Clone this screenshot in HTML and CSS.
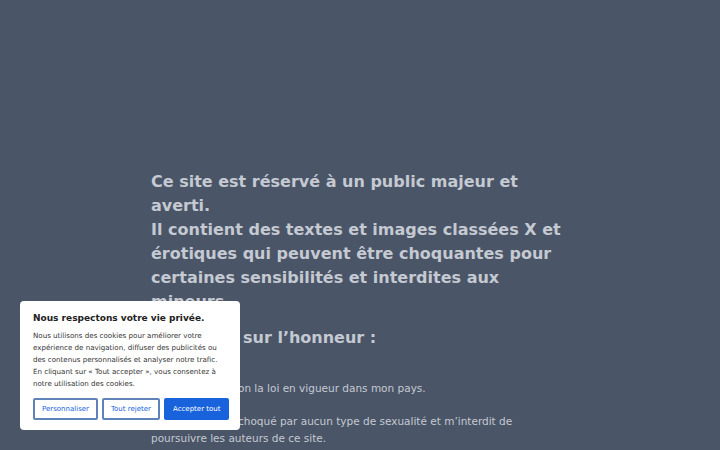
FILE: index.html
```html
<!DOCTYPE html>
<html lang="fr">
<head>
  <meta charset="utf-8">
  <title>Avertissement</title>
  <link rel="stylesheet" href="styles.css">
</head>
<body>
  <div class="warning">
    <p class="lead">Ce site est réservé à un public majeur et averti.<br>
    Il contient des textes et images classées X et érotiques qui peuvent être choquantes pour certaines sensibilités et interdites aux mineurs.</p>
    <p class="lead certify">Je certifie sur l’honneur :</p>
    <p class="item">- Être majeur selon la loi en vigueur dans mon pays.</p>
    <p class="item">- Ne jamais être choqué par aucun type de sexualité et m’interdit de poursuivre les auteurs de ce site.</p>
  </div>

  <div class="cookie-box">
    <p class="cookie-title">Nous respectons votre vie privée.</p>
    <p class="cookie-text">Nous utilisons des cookies pour améliorer votre expérience de navigation, diffuser des publicités ou des contenus personnalisés et analyser notre trafic. En cliquant sur « Tout accepter », vous consentez à notre utilisation des cookies.</p>
    <div class="cookie-buttons">
      <button class="btn btn-outline">Personnaliser</button>
      <button class="btn btn-outline">Tout rejeter</button>
      <button class="btn btn-accept">Accepter tout</button>
    </div>
  </div>
</body>
</html>
```

FILE: styles.css
```css
html, body {
  height: 100%;
}
body {
  margin: 0;
  background: #4a5568;
  font-family: "DejaVu Sans", sans-serif;
  color: #c5c9d1;
  overflow: hidden;
}
.warning {
  max-width: 418px;
  margin: 0 auto;
  padding-top: 170px;
}
.warning p {
  margin: 0;
}
.lead {
  font-size: 16px;
  font-weight: bold;
  line-height: 24px;
}
.warning .certify {
  margin-top: 12px;
  margin-bottom: 30px;
}
.warning .item {
  font-size: 10.5px;
  line-height: 17px;
  margin-bottom: 16px;
}
.cookie-box {
  position: fixed;
  left: 20px;
  bottom: 20px;
  width: 220px;
  box-sizing: border-box;
  padding: 10px 13px 10px;
  background: #fff;
  border-radius: 4px;
  color: #212121;
}
.cookie-title {
  margin: 0 0 5px;
  font-size: 9px;
  font-weight: bold;
  line-height: 14px;
}
.cookie-text {
  margin: 0 0 8px;
  padding-right: 8px;
  font-size: 7.1px;
  line-height: 12px;
  color: #333;
}
.cookie-buttons {
  display: flex;
  gap: 4px;
}
.btn {
  flex: none;
  height: 22px;
  padding: 0 7px;
  font-family: "DejaVu Sans", sans-serif;
  font-size: 7px;
  white-space: nowrap;
  border-radius: 2px;
  cursor: pointer;
}
.btn-outline {
  background: #fff;
  color: #1863dc;
  border: 2px solid #5f82b8;
}
.btn-accept {
  background: #1863dc;
  color: #fff;
  border: 2px solid #1863dc;
}
```
